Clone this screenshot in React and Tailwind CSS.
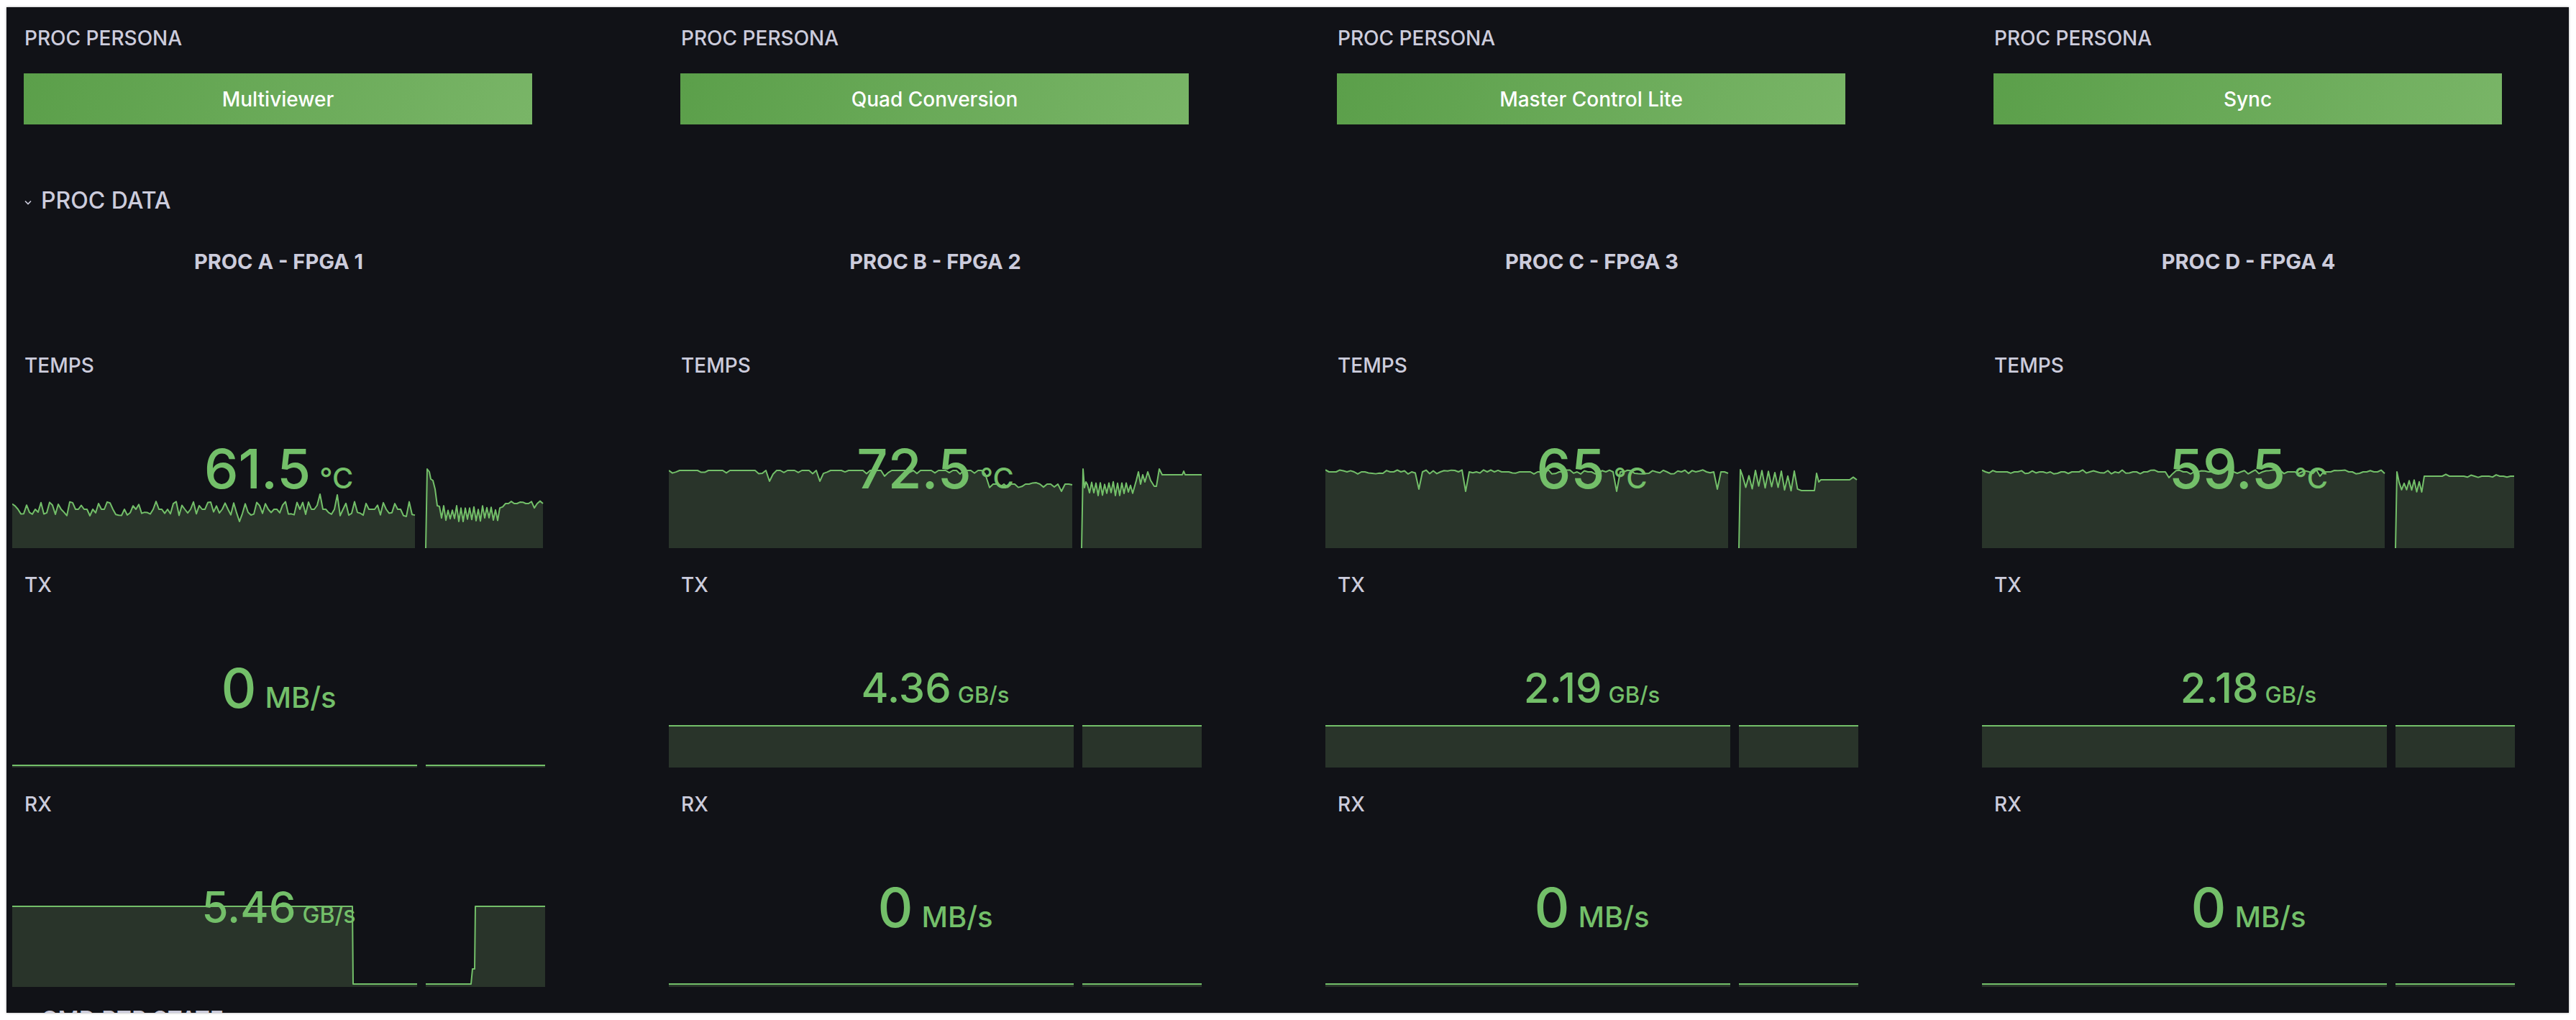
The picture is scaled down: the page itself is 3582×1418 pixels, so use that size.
import React from "react";

const W = 741;
const H = 114;

function makeRand(seed) {
  let s = seed;
  return () => {
    s = (s * 16807) % 2147483647;
    return (s - 1) / 2147483646;
  };
}

// jagged trace sitting on a base level, with random ticks up and down
function jitter(r, x0, x1, step, base, up, down, busy) {
  const pts = [];
  for (let x = x0; x <= x1; x += step) {
    const p = r();
    let y = base;
    if (p < busy / 2) y = base - up * (0.4 + 0.6 * r());
    else if (p < busy) y = base + down * (0.4 + 0.6 * r());
    pts.push([x, y]);
  }
  return pts;
}

// saw-tooth between hi and lo
function osc(r, x0, x1, step, hi, lo) {
  const pts = [];
  let flip = false;
  for (let x = x0; x <= x1; x += step) {
    const span = lo - hi;
    pts.push([x, flip ? lo - span * 0.25 * r() : hi + span * 0.3 * r()]);
    flip = !flip;
  }
  return pts;
}

function mark(pts, features) {
  features.forEach(([fx, fy]) => {
    let best = 0;
    pts.forEach((p, i) => {
      if (Math.abs(p[0] - fx) < Math.abs(pts[best][0] - fx)) best = i;
    });
    pts[best] = [pts[best][0], fy];
  });
  return pts;
}

function tempsA() {
  const r = makeRand(11);
  const a = mark(jitter(r, 0, 563, 4, 60, 11, 9, 0.75), [
    [315, 77], [430, 39], [451, 40], [550, 76], [548, 70], [120, 52], [62, 67],
  ]);
  const b = [
    [575, H], [577, 4], [580, 8], [582, 18], [585, 20], [588, 32], [591, 55],
    ...osc(r, 594, 678, 3, 55, 77),
    ...jitter(r, 682, 741, 4, 52, 4, 8, 0.5),
  ];
  return [a, b];
}

function tempsB() {
  const r = makeRand(23);
  const a = [
    ...mark(jitter(r, 0, 440, 5, 6, 0, 5, 0.45), [[141, 21], [210, 21], [300, 14]]),
    ...mark(jitter(r, 446, 563, 5, 25, 2, 6, 0.5), [[546, 35], [561, 34], [563, 26]]),
  ];
  const b = [
    [574, H], [576, 4], [578, 30], [580, 22],
    ...osc(r, 582, 645, 3, 21, 41),
    [650, 20], [653, 8], [656, 25], [659, 12], [662, 22], [666, 8], [670, 20],
    [675, 28], [678, 28], [682, 4], [686, 12], [714, 12], [716, 7], [718, 12], [741, 12],
  ];
  return [a, b];
}

function tempsC() {
  const r = makeRand(37);
  const a = mark(jitter(r, 0, 563, 5, 8, 3, 3, 0.55), [
    [129, 32], [197, 35], [404, 35], [545, 32], [563, 10],
  ]);
  const b = [
    [575, H], [577, 5],
    ...osc(r, 580, 658, 4.5, 5, 35),
    [662, 34], [680, 34], [683, 10], [686, 22], [689, 19],
    ...jitter(r, 694, 741, 5, 19, 4, 0, 0.3),
  ];
  return [a, b];
}

function tempsD() {
  const r = makeRand(51);
  const a = mark(jitter(r, 0, 563, 5, 8, 3, 3, 0.5), [[260, 16], [470, 14]]);
  const b = [
    [575, H], [577, 8],
    ...osc(r, 580, 612, 3.5, 19, 37),
    [615, 14],
    ...jitter(r, 620, 741, 5, 14, 3, 2, 0.35),
  ];
  return [a, b];
}

const flat = (y) => [
  [[0, y], [563, y]],
  [[575, y], [741, y]],
];

const rxA = [
  [[0, 2], [473, 2], [474, 110], [563, 110]],
  [[575, 110], [638, 110], [640, 89], [643, 89], [644, 2], [741, 2]],
];

function Sparkline({ segments }) {
  return (
    <svg width={W} height={H} viewBox={`0 0 ${W} ${H}`} className="absolute left-0 top-[170px]">
      {segments.map((pts, i) => {
        const line = pts.map(([x, y]) => `${x},${y}`).join(" ");
        const area = `M${pts[0][0]},${H} L${line.replace(/ /g, " L")} L${pts[pts.length - 1][0]},${H} Z`;
        return (
          <g key={i}>
            <path d={area} fill="#29342a" />
            <polyline points={line} fill="none" stroke="#73bf69" strokeWidth="2" strokeLinejoin="round" />
          </g>
        );
      })}
    </svg>
  );
}

function StatPanel({ label, value, unit, size, unitSize, gap, spark }) {
  return (
    <div className="relative h-[305px]">
      <div className="h-[44px] pl-[17px] pt-[16px] text-[28px] font-medium leading-none text-[#ccccdc]">{label}</div>
      <Sparkline segments={spark} />
      <div className="relative z-10 flex h-[257px] items-center justify-center">
        <div className="flex items-baseline font-medium leading-none text-[#73bf69]">
          <span className={size}>{value}</span>
          <span className={`${unitSize} ${gap}`}>{unit}</span>
        </div>
      </div>
    </div>
  );
}

const procs = [
  {
    persona: "Multiviewer",
    title: "PROC A - FPGA 1",
    temp: "61.5",
    temps: tempsA(),
    tx: { value: "0", unit: "MB/s", size: "text-[76px]", unitSize: "text-[40px]", gap: "ml-[12px]", spark: flat(111) },
    rx: { value: "5.46", unit: "GB/s", size: "text-[60px]", unitSize: "text-[32px]", gap: "ml-[9px]", spark: rxA },
  },
  {
    persona: "Quad Conversion",
    title: "PROC B - FPGA 2",
    temp: "72.5",
    temps: tempsB(),
    tx: { value: "4.36", unit: "GB/s", size: "text-[58px]", unitSize: "text-[31px]", gap: "ml-[9px]", spark: flat(56) },
    rx: { value: "0", unit: "MB/s", size: "text-[76px]", unitSize: "text-[40px]", gap: "ml-[12px]", spark: flat(110) },
  },
  {
    persona: "Master Control Lite",
    title: "PROC C - FPGA 3",
    temp: "65",
    temps: tempsC(),
    tx: { value: "2.19", unit: "GB/s", size: "text-[58px]", unitSize: "text-[31px]", gap: "ml-[9px]", spark: flat(56) },
    rx: { value: "0", unit: "MB/s", size: "text-[76px]", unitSize: "text-[40px]", gap: "ml-[12px]", spark: flat(110) },
  },
  {
    persona: "Sync",
    title: "PROC D - FPGA 4",
    temp: "59.5",
    temps: tempsD(),
    tx: { value: "2.18", unit: "GB/s", size: "text-[58px]", unitSize: "text-[31px]", gap: "ml-[9px]", spark: flat(56) },
    rx: { value: "0", unit: "MB/s", size: "text-[76px]", unitSize: "text-[40px]", gap: "ml-[12px]", spark: flat(110) },
  },
];

function RowTitle({ children, className }) {
  return (
    <div className={`flex h-[32px] items-center pl-[17px] text-[32px] font-medium leading-none text-[#ccccdc] ${className}`}>
      <svg width="10" height="7" viewBox="0 0 10 7" className="mt-[5px] mr-[13px]">
        <path d="M1 1.5 L5 5.5 L9 1.5" fill="none" stroke="#ccccdc" strokeWidth="1.6" />
      </svg>
      {children}
    </div>
  );
}

export default function App() {
  return (
    <div className="min-h-[1418px] bg-white pt-[10px] pr-[10px] pl-[9px] font-[Inter,sans-serif]">
      <div className="h-[1398px] overflow-hidden bg-[#111217] pl-[8px] pt-[29px] shadow-[0_0_3px_rgba(0,0,0,0.35)]">
        <div className="grid grid-cols-[repeat(4,741px)] gap-x-[172px]">
          {procs.map((p) => (
            <div key={p.persona}>
              <div className="h-[28px] pl-[17px] text-[28px] font-medium leading-none text-[#ccccdc]">PROC PERSONA</div>
              <div className="mt-[35px] ml-[16px] flex h-[71px] w-[707px] items-center justify-center bg-[linear-gradient(110deg,#5b9f4a,#79b567)] text-[28px] font-medium text-white">
                {p.persona}
              </div>
            </div>
          ))}
        </div>

        <RowTitle className="mt-[90px]">PROC DATA</RowTitle>

        <div className="mt-[54px] grid grid-cols-[repeat(4,741px)] gap-x-[172px]">
          {procs.map((p) => (
            <div key={p.title}>
              <div className="h-[29px] text-center text-[29px] font-bold leading-none text-[#ccccdc]">{p.title}</div>
              <div className="mt-[100px]">
                <StatPanel label="TEMPS" value={p.temp} unit="°C" size="text-[76px]" unitSize="text-[40px]" gap="ml-[12px]" spark={p.temps} />
                <StatPanel label="TX" {...p.tx} />
                <StatPanel label="RX" {...p.rx} />
              </div>
            </div>
          ))}
        </div>

        <RowTitle className="mt-[9px]">CMD RTR STATE</RowTitle>
      </div>
    </div>
  );
}
